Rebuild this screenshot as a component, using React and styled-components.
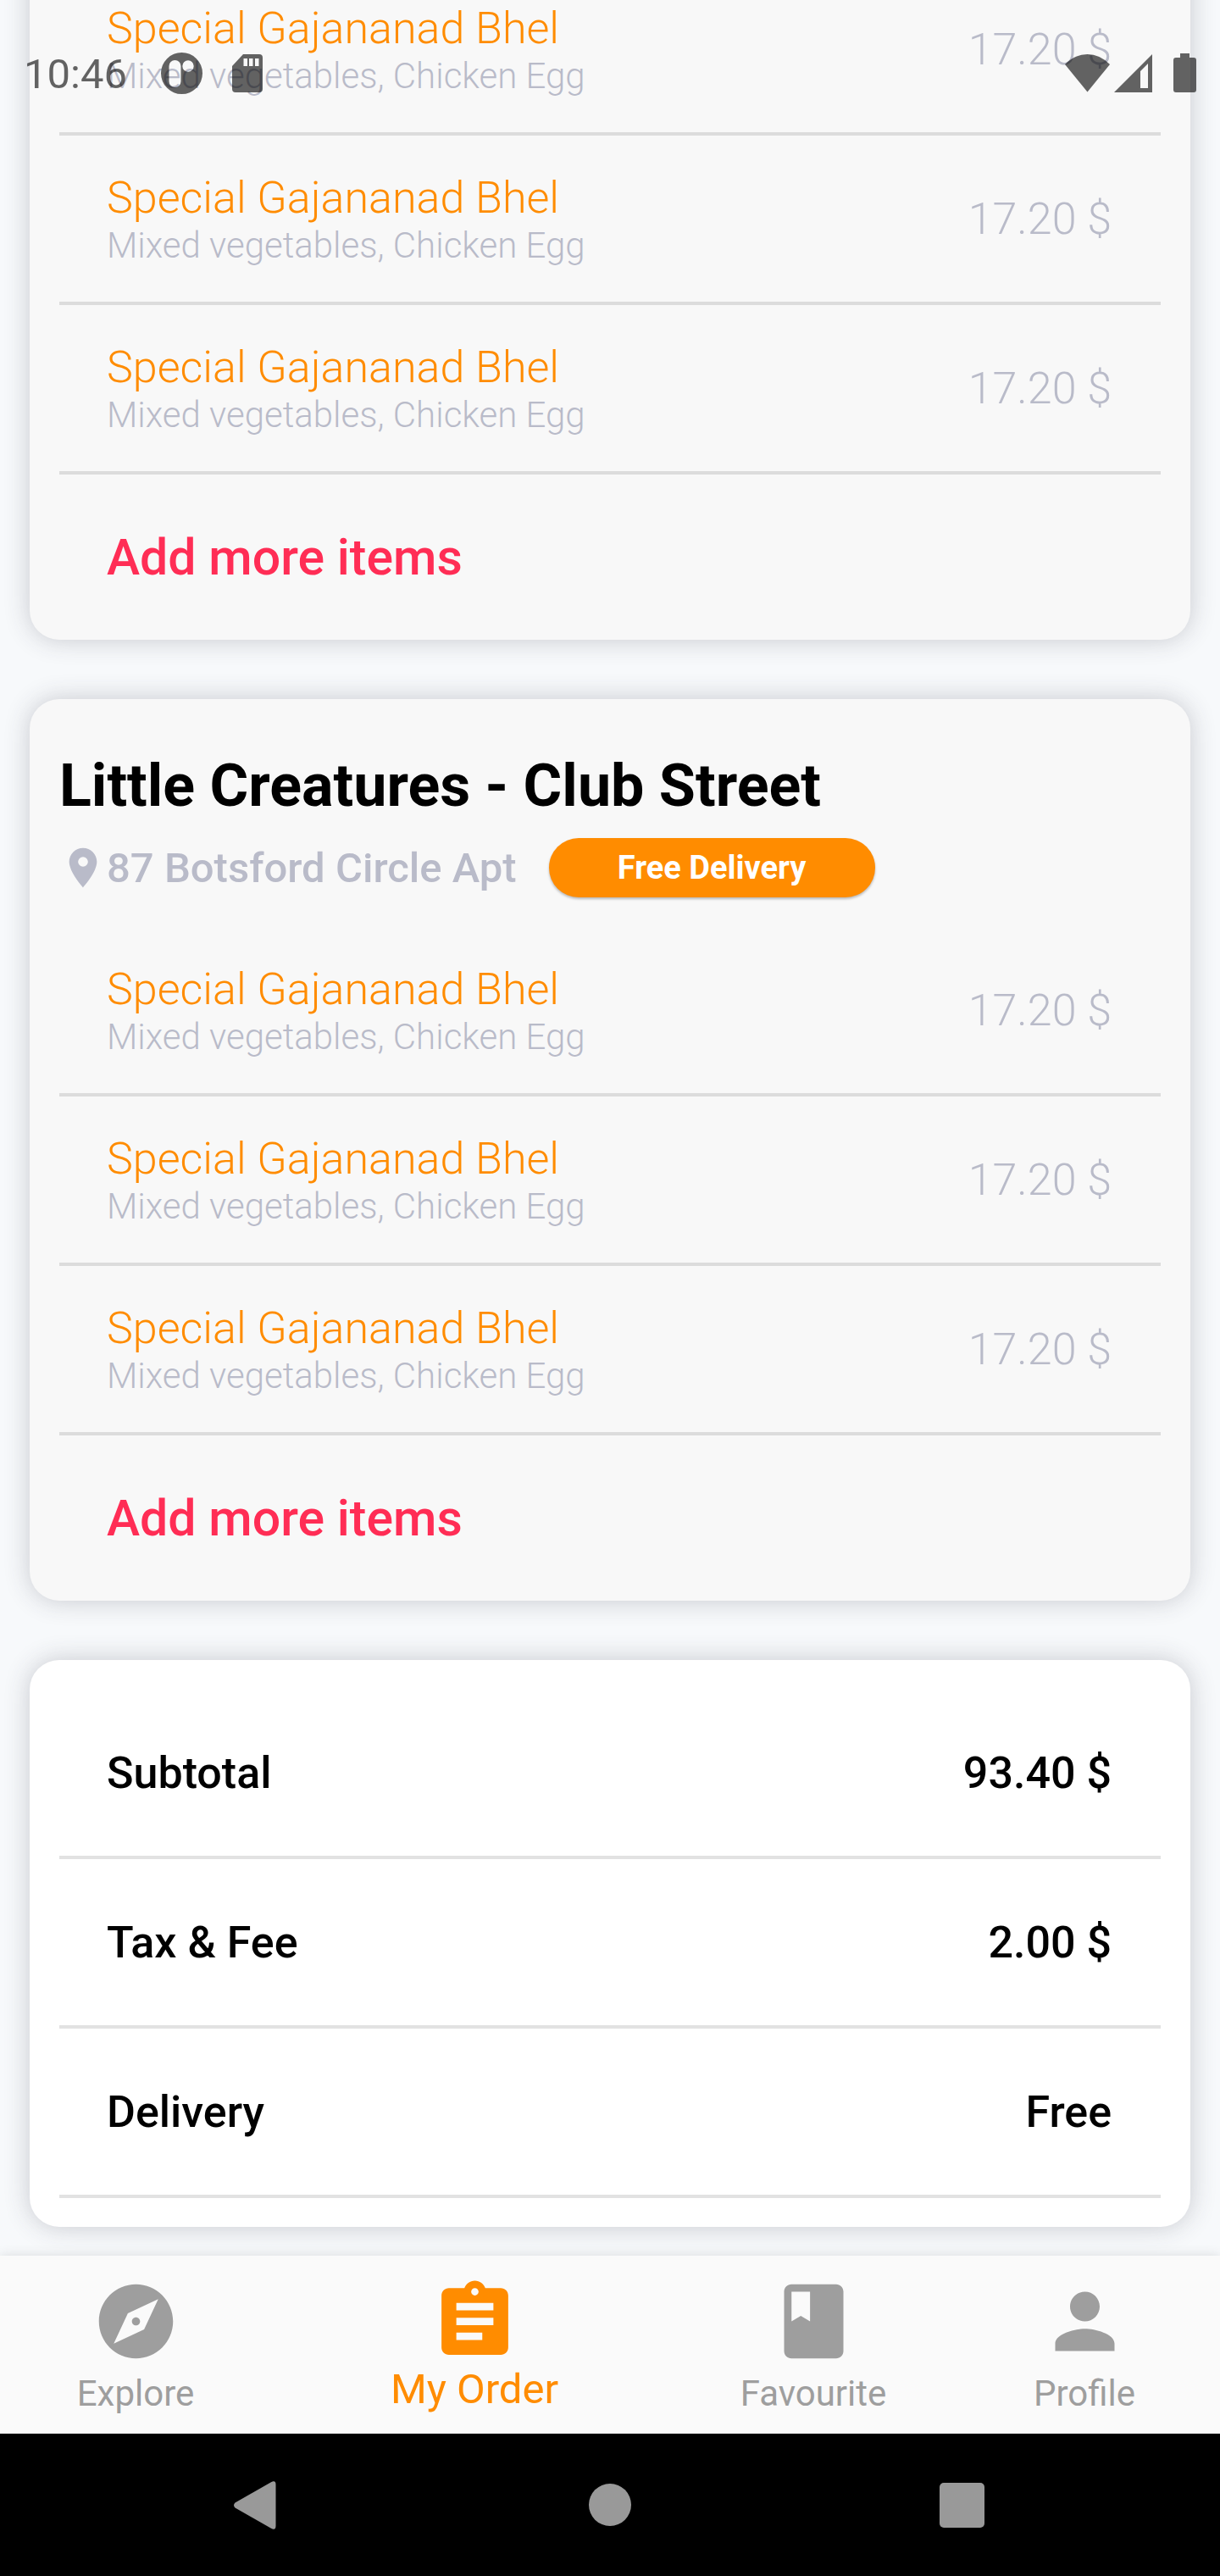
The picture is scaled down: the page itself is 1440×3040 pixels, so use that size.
import React from "react";
import styled, { createGlobalStyle } from "styled-components";
import { MdLocationOn, MdExplore, MdAssignment, MdClass, MdPerson } from "react-icons/md";

const GlobalStyle = createGlobalStyle`
  *, *::before, *::after { box-sizing: border-box; }
  body {
    margin: 0;
    background: #f7f9fb;
    font-family: Roboto, "Liberation Sans", sans-serif;
    color: #000;
  }
  button { font: inherit; border: 0; padding: 0; background: none; cursor: pointer; }
  h2, p, ul, dl, dd, dt { margin: 0; padding: 0; }
`;

const Screen = styled.div`
  position: relative;
  display: flex;
  flex-direction: column;
  height: 100vh;
  overflow: hidden;
`;

const StatusBar = styled.header`
  position: absolute;
  inset: 0 0 auto 0;
  z-index: 1;
  display: flex;
  align-items: center;
  padding: 42px 28px 0;
  opacity: 0.6;
`;

const Clock = styled.time`
  font-size: 49px;
  line-height: 84px;
  padding-top: 4px;
  margin-right: 40px;
`;

const StatusGroup = styled.div`
  display: flex;
  align-items: center;
  gap: 35px;
`;

const SignalGroup = styled.div`
  display: flex;
  align-items: center;
  gap: 5px;
  margin: 0 25px 0 auto;
`;

const Content = styled.main`
  flex: 1;
  min-height: 0;
  display: flex;
  flex-direction: column;
  justify-content: flex-end;
  gap: 70px;
  padding: 0 35px 34px;
  overflow: hidden;
`;

const Card = styled.section`
  flex: none;
  padding: 35px 35px ${(p) => (p.$summary ? 34 : 0)}px;
  border-radius: 35px;
  background: ${(p) => (p.$summary ? "#fff" : "#f8f8f8")};
  box-shadow: 0 0 30px rgba(50, 50, 65, 0.24);
`;

const CardHead = styled.div`
  padding-top: 25px;
  margin-bottom: 34px;
`;

const Restaurant = styled.h2`
  font-size: 70px;
  line-height: 84px;
  font-weight: 700;
`;

const AddressLine = styled.div`
  display: flex;
  align-items: center;
  margin-top: 19px;
  color: #b9bbc9;
`;

const Address = styled.p`
  font-size: 49px;
  line-height: 70px;
  font-weight: 500;
  padding-top: 2px;
  margin-right: 38px;
`;

const Pill = styled.button`
  width: 385px;
  height: 70px;
  border-radius: 35px;
  background: #ff8c00;
  color: #fff;
  font-size: 38px;
  font-weight: 700;
  box-shadow: 0 2px 3px rgba(0, 0, 0, 0.26);
`;

const List = styled.ul`
  list-style: none;
`;

const Row = styled.li`
  display: flex;
  align-items: center;
  justify-content: space-between;
  height: 200px;
  padding: 2px 58px 0 56px;
  border-bottom: 4px solid ${(p) => (p.$light ? "#e2e2e2" : "#dcdcdc")};
`;

const Dish = styled.p`
  font-size: 52px;
  line-height: 62px;
  font-weight: 300;
  color: #ff8c00;
`;

const Description = styled.p`
  font-size: 42px;
  line-height: 50px;
  font-weight: 300;
  color: #b9bbc9;
`;

const Price = styled.p`
  font-size: 52px;
  line-height: 62px;
  font-weight: 300;
  color: #b9bbc9;
`;

const TotalLabel = styled.dt`
  font-size: 52px;
  line-height: 62px;
  font-weight: 500;
`;

const TotalValue = styled.dd`
  font-size: 52px;
  line-height: 62px;
  font-weight: 500;
`;

const AddButton = styled.button`
  display: block;
  width: 100%;
  height: 195px;
  padding: 0 56px;
  text-align: left;
  font-size: 59px;
  font-weight: 500;
  color: #ff2d55;
`;

const TabBar = styled.nav`
  position: relative;
  display: flex;
  height: 210px;
  background: #fafafa;
  box-shadow: 0 0 14px rgba(0, 0, 0, 0.12);
`;

const Tab = styled.a`
  flex: ${(p) => (p.$active ? 3 : 2)};
  display: flex;
  flex-direction: column;
  align-items: center;
  padding-top: 25px;
  text-decoration: none;
  color: ${(p) => (p.$active ? "#ff8c00" : "#9e9e9e")};
  font-size: ${(p) => (p.$active ? 49 : 42)}px;
  line-height: ${(p) => (p.$active ? 56 : 65)}px;
`;

const SystemBar = styled.footer`
  position: relative;
  display: flex;
  height: 168px;
  padding: 0 97px;
  background: #000;
`;

const SystemButton = styled.button`
  flex: 1;
  display: flex;
  align-items: center;
  justify-content: center;
  color: #999;
`;

const dishes = [1, 2, 3].map((id) => ({
  id,
  name: "Special Gajananad Bhel",
  description: "Mixed vegetables, Chicken Egg",
  price: "17.20 $",
}));

const totals = [
  ["Subtotal", "93.40 $"],
  ["Tax & Fee", "2.00 $"],
  ["Delivery", "Free"],
];

const tabs = [
  { label: "Explore", Icon: MdExplore },
  { label: "My Order", Icon: MdAssignment, active: true },
  { label: "Favourite", Icon: MdClass },
  { label: "Profile", Icon: MdPerson },
];

function OrderItems() {
  return (
    <>
      <List>
        {dishes.map((dish) => (
          <Row key={dish.id}>
            <div>
              <Dish>{dish.name}</Dish>
              <Description>{dish.description}</Description>
            </div>
            <Price>{dish.price}</Price>
          </Row>
        ))}
      </List>
      <AddButton type="button">Add more items</AddButton>
    </>
  );
}

function FaceIcon() {
  return (
    <svg width="49" height="49" viewBox="0 0 49 49" fill="currentColor" aria-hidden="true">
      <path
        fillRule="evenodd"
        d="M24.5 0a24.5 24.5 0 1 1 0 49a24.5 24.5 0 1 1 0-49zM16.5 9a7 7 0 0 0-7 7v18a7 7 0 0 0 14 0V16a7 7 0 0 0-7-7zM32 9.300a6.700 6.700 0 1 0 0 13.400a6.700 6.700 0 1 0 0-13.400z"
      />
    </svg>
  );
}

function SdIcon() {
  return (
    <svg width="36" height="45" viewBox="0 0 36 45" fill="currentColor" aria-hidden="true">
      <path
        fillRule="evenodd"
        d="M13 0h19a4 4 0 0 1 4 4v37a4 4 0 0 1-4 4H4a4 4 0 0 1-4-4V14zM13.500 5v9h4.500V5zM20 5v9h4.500V5zM27 5v9h4.500V5z"
      />
    </svg>
  );
}

function WifiIcon() {
  return (
    <svg width="53" height="45" viewBox="0 0 53 45" fill="currentColor" aria-hidden="true">
      <path d="M26.500 44.500L0 12Q12 0 26.500 0T53 12z" />
    </svg>
  );
}

function SignalIcon() {
  return (
    <svg width="45" height="45" viewBox="0 0 45 45" fill="currentColor" aria-hidden="true">
      <path fillRule="evenodd" d="M45 0v45H0zM40 11L31 20v20h9z" />
    </svg>
  );
}

function BatteryIcon() {
  return (
    <svg width="27" height="46" viewBox="0 0 27 46" fill="currentColor" aria-hidden="true">
      <path d="M8 0h11v5h5a3 3 0 0 1 3 3v35a3 3 0 0 1-3 3H3a3 3 0 0 1-3-3V8a3 3 0 0 1 3-3h5z" />
    </svg>
  );
}

export default function App() {
  return (
    <Screen>
      <GlobalStyle />
      <StatusBar>
        <Clock>10:46</Clock>
        <StatusGroup>
          <FaceIcon />
          <SdIcon />
        </StatusGroup>
        <SignalGroup>
          <WifiIcon />
          <SignalIcon />
        </SignalGroup>
        <BatteryIcon />
      </StatusBar>

      <Content>
        <Card>
          <OrderItems />
        </Card>

        <Card>
          <CardHead>
            <Restaurant>Little Creatures - Club Street</Restaurant>
            <AddressLine>
              <MdLocationOn size={56} aria-hidden="true" />
              <Address>87 Botsford Circle Apt</Address>
              <Pill type="button">Free Delivery</Pill>
            </AddressLine>
          </CardHead>
          <OrderItems />
        </Card>

        <Card $summary>
          <dl>
            {totals.map(([label, value]) => (
              <Row as="div" key={label} $light>
                <TotalLabel>{label}</TotalLabel>
                <TotalValue>{value}</TotalValue>
              </Row>
            ))}
          </dl>
        </Card>
      </Content>

      <TabBar>
        {tabs.map(({ label, Icon, active }) => (
          <Tab key={label} href="#" $active={active} aria-current={active ? "page" : undefined}>
            <Icon size={105} aria-hidden="true" />
            {label}
          </Tab>
        ))}
      </TabBar>

      <SystemBar>
        <SystemButton type="button" aria-label="Back">
          <svg width="58" height="57" viewBox="0 0 58 57" fill="currentColor" aria-hidden="true">
            <path d="M1.500 25.500L44 1.200Q49.500-1.500 49.500 4V53Q49.500 58.500 44 55.800L1.500 31.500Q-1.500 28.500 1.500 25.500z" />
          </svg>
        </SystemButton>
        <SystemButton type="button" aria-label="Home">
          <svg width="50" height="50" viewBox="0 0 50 50" fill="currentColor" aria-hidden="true">
            <circle cx="25" cy="25" r="25" />
          </svg>
        </SystemButton>
        <SystemButton type="button" aria-label="Recent apps">
          <svg width="53" height="53" viewBox="0 0 53 53" fill="currentColor" aria-hidden="true">
            <rect width="53" height="53" rx="5" />
          </svg>
        </SystemButton>
      </SystemBar>
    </Screen>
  );
}
